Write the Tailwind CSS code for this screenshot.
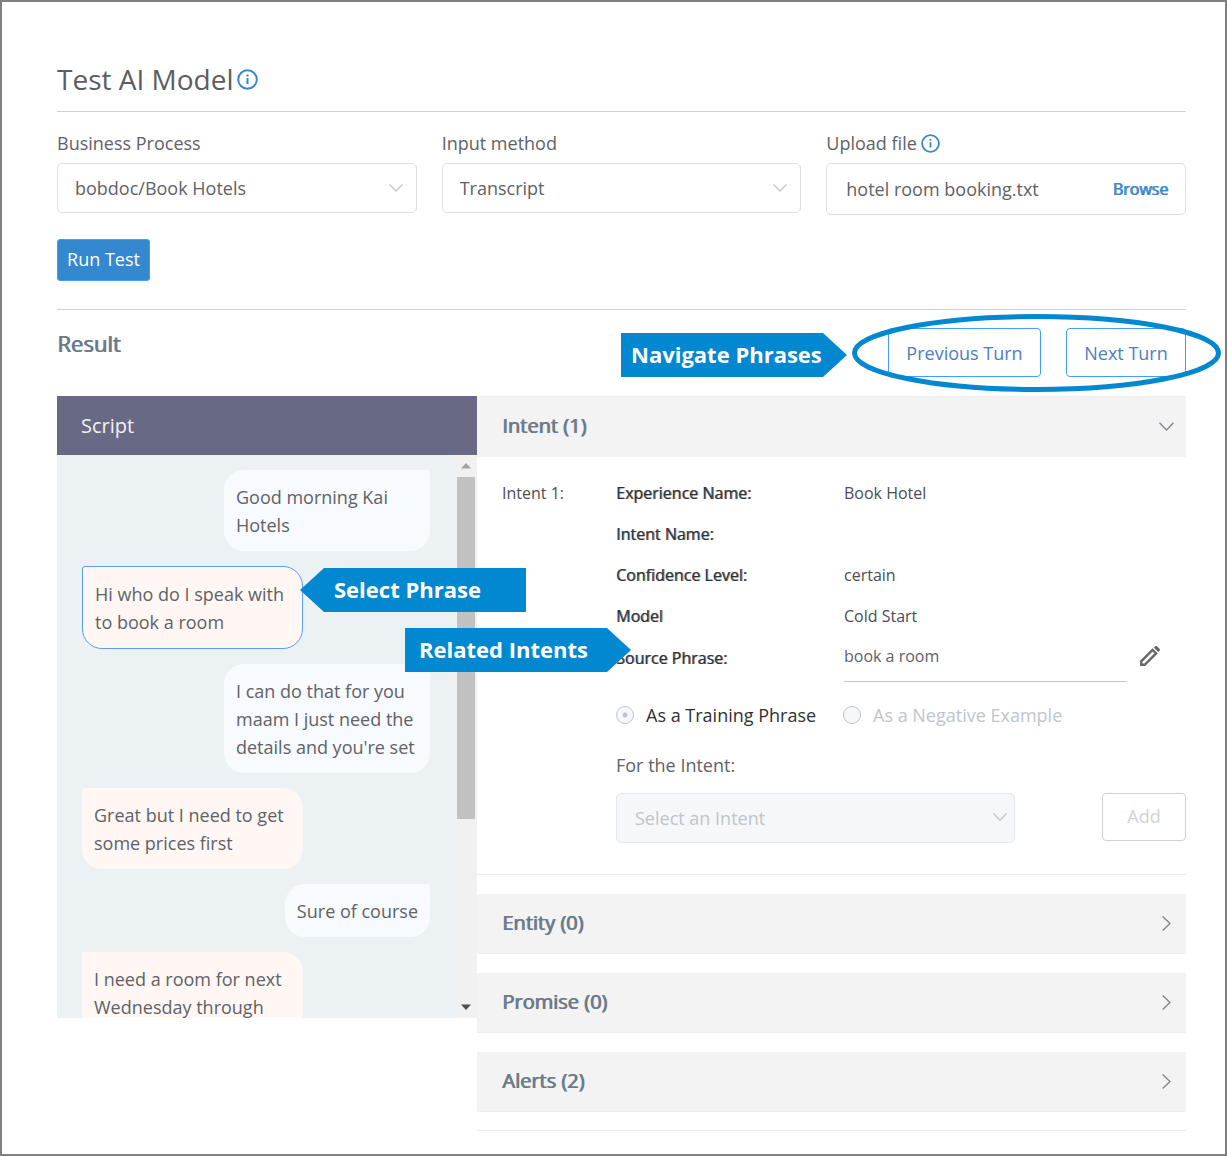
<!DOCTYPE html>
<html lang="en">
<head>
  <meta charset="UTF-8" />
  <meta name="viewport" content="width=device-width, initial-scale=1.0" />
  <title>Test AI Model</title>
  <script src="https://cdn.jsdelivr.net/npm/@tailwindcss/browser@4"></script>
</head>
<body class="bg-white font-['Open_Sans','Noto_Sans',sans-serif] text-lg text-[#606266]">
  <div class="min-h-screen border-2 border-[#808080] pt-[58px] pr-[39px] pb-5 pl-[55px]">

    <header class="flex items-center gap-[3px] border-b border-[#cfd2d3] pb-[13px]">
      <h1 class="text-[28px] leading-[38px] text-[#5c5d60]">Test AI Model</h1>
      <svg class="size-[21px]" viewBox="0 0 21 21" fill="none" stroke="#3488cf" stroke-width="2">
        <circle cx="10.500" cy="10.500" r="9.300" />
        <path d="M10.500 9v6M10.500 5.500v2" />
      </svg>
    </header>

    <!-- Test settings -->
    <form>
      <div class="grid grid-cols-3 gap-[25px] pt-[19px]">
        <div>
          <label for="process" class="block leading-6">Business Process</label>
          <div class="relative mt-2">
            <select id="process" class="h-[50px] w-full appearance-none rounded-[5px] border border-[#dcdfe6] pr-10 pl-[17px]">
              <option>bobdoc/Book Hotels</option>
            </select>
            <svg class="pointer-events-none absolute top-[21px] right-[14px] h-2 w-[14px]" viewBox="0 0 14 8" fill="none" stroke="#c0c4cc" stroke-width="1.300"><path d="M.5.5 7 7l6.500-6.500" /></svg>
          </div>
        </div>
        <div>
          <label for="method" class="block leading-6">Input method</label>
          <div class="relative mt-2">
            <select id="method" class="h-[50px] w-full appearance-none rounded-[5px] border border-[#dcdfe6] pr-10 pl-[17px]">
              <option>Transcript</option>
            </select>
            <svg class="pointer-events-none absolute top-[21px] right-[14px] h-2 w-[14px]" viewBox="0 0 14 8" fill="none" stroke="#c0c4cc" stroke-width="1.300"><path d="M.5.5 7 7l6.500-6.500" /></svg>
          </div>
        </div>
        <div>
          <div class="flex items-center gap-1">
            <label for="file" class="leading-6">Upload file</label>
            <svg class="size-[19px]" viewBox="0 0 21 21" fill="none" stroke="#3488cf" stroke-width="2">
              <circle cx="10.500" cy="10.500" r="9.300" />
              <path d="M10.500 9v6M10.500 5.500v2" />
            </svg>
          </div>
          <div class="mt-2 flex h-[52px] items-center rounded-[5px] border border-[#dcdfe6] pr-[17px] pl-[19px]">
            <input id="file" type="text" value="hotel room booking.txt" class="min-w-0 flex-1 outline-none" />
            <button type="button" class="text-base text-[#3f86cc] [text-shadow:1px_0_#3f86cc]">Browse</button>
          </div>
        </div>
      </div>
      <button type="button" class="mt-6 block h-[42px] w-[93px] rounded-[3px] border border-[#409eff] bg-[#3488cf] pb-[2px] text-white">Run Test</button>
    </form>

    <!-- Result heading and turn navigation -->
    <div class="mt-7 flex items-start justify-between border-t border-[#cfd2d3] pt-[18px] pb-[19px]">
      <h2 class="text-[22px] leading-[30px] text-[#6c7a89] [text-shadow:1px_0_#6c7a89]">Result</h2>
      <nav class="relative flex gap-[25px]">
        <button type="button" class="h-[49px] w-[153px] rounded-[4px] border border-[#409eff] text-[#4a80c4]">Previous Turn</button>
        <button type="button" class="h-[49px] w-[120px] rounded-[4px] border border-[#409eff] text-[#4a80c4]">Next Turn</button>
        <svg class="pointer-events-none absolute -top-[14px] -left-9 h-[78px] w-[369px]" viewBox="0 0 369 78" fill="none" stroke="#0288d1" stroke-width="5">
          <ellipse cx="184.500" cy="39" rx="182" ry="36.500" />
        </svg>
        <div class="absolute top-[5px] right-full mr-[41px] flex h-11 w-[226px] items-center bg-[#0288d1] pb-[2px] pl-[10px] text-[22px] font-bold whitespace-nowrap text-white [clip-path:polygon(0_0,202px_0,100%_50%,202px_100%,0_100%)]">Navigate Phrases</div>
      </nav>
    </div>

    <div class="relative flex items-start">

      <!-- Conversation script -->
      <section class="w-[420px] shrink-0">
        <h3 class="flex h-[59px] items-center bg-[#686985] pl-6 text-xl text-[#f2f2f2]">Script</h3>
        <div class="flex h-[563px] bg-[#ecf1f4]">
          <div class="flex min-w-0 flex-1 flex-col items-start gap-[15px] overflow-hidden pt-[15px] pr-[25px] pl-[25px] leading-7 *:shrink-0">
            <p class="w-[206px] self-end rounded-[20px] rounded-tr-[3px] bg-[#f7faff] px-3 pt-[13px] pb-3">Good morning Kai Hotels</p>
            <p class="w-[221px] rounded-[20px] rounded-tl-[3px] border border-[#5a9cf0] bg-[#fff7f4] px-3 pt-[13px] pb-3">Hi who do I speak with to book a room</p>
            <p class="w-[206px] self-end rounded-[20px] rounded-tr-[3px] bg-[#f7faff] px-3 pt-[13px] pb-3">I can do that for you maam I just need the details and you're set</p>
            <p class="w-[221px] rounded-[20px] rounded-tl-[3px] bg-[#fff7f4] px-3 pt-[13px] pb-3">Great but I need to get some prices first</p>
            <p class="self-end rounded-[20px] rounded-tr-[3px] bg-[#f7faff] px-3 pt-[13px] pb-3">Sure of course</p>
            <p class="w-[221px] rounded-[20px] rounded-tl-[3px] bg-[#fff7f4] px-3 pt-[13px] pb-3">I need a room for next Wednesday through</p>
          </div>
          <div class="flex w-[22px] flex-col items-center bg-[#f1f1f1]">
            <svg class="my-2 h-[6px] w-[10px]" viewBox="0 0 10 6" fill="#a3a3a3"><path d="M5 0l5 5.500H0z" /></svg>
            <div class="h-[342px] w-[18px] bg-[#c1c1c1]"></div>
            <svg class="mt-auto mb-2 h-[6px] w-[10px]" viewBox="0 0 10 6" fill="#505050"><path d="M5 6l5-5.500H0z" /></svg>
          </div>
        </div>
      </section>

      <!-- Intent details -->
      <section class="min-w-0 flex-1">
        <button type="button" class="flex h-[61px] w-full items-center justify-between border-t border-[#ebeef5] bg-[#f3f3f3] pr-3 pb-[2px] pl-[25px] text-xl text-[#6c7a89] [text-shadow:1px_0_#6c7a89]">
          Intent (1)
          <svg class="h-[9px] w-[15px]" viewBox="0 0 15 9" fill="none" stroke="#7d838c" stroke-width="1.300"><path d="M.5.7l7 7.300 7-7.300" /></svg>
        </button>

        <div class="flex border-b border-[#ebeef5] pt-4 pb-[31px] pl-[25px] text-base text-[#303133]">
          <p class="w-[114px] shrink-0 leading-[41px] text-[#4c4d50]">Intent 1:</p>
          <div class="min-w-0 flex-1">
            <dl class="grid grid-cols-[228px_1fr] auto-rows-[41px] leading-[41px]">
              <dt class="[text-shadow:1px_0_#30313399]">Experience Name:</dt>
              <dd class="text-[#4c4d50]">Book Hotel</dd>
              <dt class="[text-shadow:1px_0_#30313399]">Intent Name:</dt>
              <dd></dd>
              <dt class="[text-shadow:1px_0_#30313399]">Confidence Level:</dt>
              <dd class="text-[#4c4d50]">certain</dd>
              <dt class="[text-shadow:1px_0_#30313399]">Model</dt>
              <dd class="text-[#4c4d50]">Cold Start</dd>
            </dl>
            <div class="flex items-center">
              <label for="phrase" class="w-[228px] shrink-0 pb-[3px] [text-shadow:1px_0_#30313399]">Source Phrase:</label>
              <input id="phrase" type="text" value="book a room" class="h-[45px] min-w-0 flex-1 border-b border-[#c4c4c8] pb-[6px] text-[#606266] outline-none" />
              <button type="button" aria-label="Edit phrase" class="mr-[25px] ml-3 pb-2">
                <svg class="size-[22px]" viewBox="0 0 22 22" fill="none" stroke="#67686f" stroke-width="2.400">
                  <path d="M2.200 19.800v-3.500L13.600 4.900l3.500 3.500L5.700 19.800z" />
                  <path d="M14.900 2.800l1.500-1.500c.5-.5 1.200-.5 1.700 0l2.600 2.600c.5.5.5 1.200 0 1.700l-1.500 1.500z" fill="#67686f" stroke="none" />
                </svg>
              </button>
            </div>

            <div class="mt-[21px] flex items-center text-lg leading-6">
              <input id="training" type="radio" name="usage" checked disabled class="size-[18px] appearance-none rounded-full border border-[#c0c4cc] bg-[radial-gradient(circle,#c0c4cc_0_2px,#f5f7fa_3px)]" />
              <label for="training" class="w-[197px] pl-3">As a Training Phrase</label>
              <input id="negative" type="radio" name="usage" disabled class="ml-3 size-[18px] appearance-none rounded-full border border-[#c0c4cc] bg-[#f5f7fa]" />
              <label for="negative" class="pl-3 text-[#c0c4cc]">As a Negative Example</label>
            </div>

            <label for="intent" class="mt-[26px] block text-lg leading-6 text-[#606266]">For the Intent:</label>
            <div class="mt-4 flex items-start justify-between text-lg">
              <div class="relative w-[399px]">
                <select id="intent" disabled class="h-[50px] w-full appearance-none rounded-[5px] border border-[#e4e7ed] bg-[#f5f7fa] pl-[18px] text-[#c0c4cc] opacity-100">
                  <option>Select an Intent</option>
                </select>
                <svg class="pointer-events-none absolute top-5 right-[8px] h-2 w-[14px]" viewBox="0 0 14 8" fill="none" stroke="#c0c4cc" stroke-width="1.300"><path d="M.5.5 7 7l6.500-6.500" /></svg>
              </div>
              <button type="button" disabled class="h-12 w-[84px] rounded-[4px] border border-[#d0d3d4] pb-[2px] text-[#d0d3d4]">Add</button>
            </div>
          </div>
        </div>

        <div class="flex flex-col gap-[19px] border-b border-[#ebeef5] pt-[19px] pb-[18px]">
          <button type="button" class="flex h-[60px] w-full items-center justify-between border-b border-[#ebeef5] bg-[#f3f3f3] pr-[15px] pb-px pl-[25px] text-xl text-[#6c7a89] [text-shadow:1px_0_#6c7a89]">
            Entity (0)
            <svg class="h-[15px] w-[9px]" viewBox="0 0 9 15" fill="none" stroke="#7d838c" stroke-width="1.300"><path d="M.7.5L8 7.500l-7.300 7" /></svg>
          </button>
          <button type="button" class="flex h-[60px] w-full items-center justify-between border-b border-[#ebeef5] bg-[#f3f3f3] pr-[15px] pb-px pl-[25px] text-xl text-[#6c7a89] [text-shadow:1px_0_#6c7a89]">
            Promise (0)
            <svg class="h-[15px] w-[9px]" viewBox="0 0 9 15" fill="none" stroke="#7d838c" stroke-width="1.300"><path d="M.7.5L8 7.500l-7.300 7" /></svg>
          </button>
          <button type="button" class="flex h-[60px] w-full items-center justify-between border-b border-[#ebeef5] bg-[#f3f3f3] pr-[15px] pb-px pl-[25px] text-xl text-[#6c7a89] [text-shadow:1px_0_#6c7a89]">
            Alerts (2)
            <svg class="h-[15px] w-[9px]" viewBox="0 0 9 15" fill="none" stroke="#7d838c" stroke-width="1.300"><path d="M.7.5L8 7.500l-7.300 7" /></svg>
          </button>
        </div>
      </section>

      <!-- Callouts over the two panels -->
      <div class="absolute top-[172px] left-[243px] flex h-11 w-[226px] items-center bg-[#0288d1] pb-[2px] pl-[34px] text-[22px] font-bold whitespace-nowrap text-white [clip-path:polygon(24px_0,100%_0,100%_100%,24px_100%,0_50%)]">Select Phrase</div>
      <div class="absolute top-[232px] left-[348px] flex h-11 w-[226px] items-center bg-[#0288d1] pb-[2px] pl-[14px] text-[22px] font-bold whitespace-nowrap text-white [clip-path:polygon(0_0,202px_0,100%_50%,202px_100%,0_100%)]">Related Intents</div>
    </div>
  </div>
</body>
</html>
